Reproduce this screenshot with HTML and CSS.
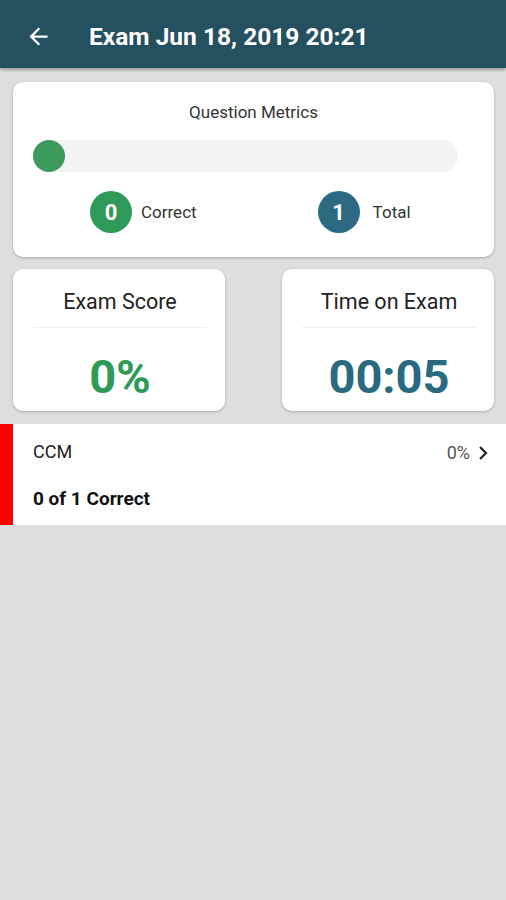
FILE: index.html
```html
<!DOCTYPE html>
<html lang="en">
<head>
    <meta charset="UTF-8">
    <meta name="viewport" content="width=device-width, initial-scale=1.0">
    <title>Exam Results</title>
    <link rel="stylesheet" href="styles.css">
</head>
<body>

    <header class="topbar">
        <svg class="back" width="27" height="27" viewBox="0 0 24 24">
            <path d="M20 11H7.83l5.59-5.59L12 4l-8 8 8 8 1.41-1.41L7.83 13H20v-2z" fill="#fff"/>
        </svg>
        <h1>Exam Jun 18, 2019 20:21</h1>
    </header>

    <main class="content">
        <section class="card metrics">
            <h2>Question Metrics</h2>
            <div class="track">
                <div class="fill"></div>
            </div>
            <div class="counts">
                <div class="count">
                    <span class="badge green">0</span>
                    <span class="label">Correct</span>
                </div>
                <div class="count">
                    <span class="badge blue">1</span>
                    <span class="label">Total</span>
                </div>
            </div>
        </section>

        <div class="stats">
            <section class="card stat">
                <h3>Exam Score</h3>
                <div class="value green-text">0%</div>
            </section>
            <section class="card stat">
                <h3>Time on Exam</h3>
                <div class="value blue-text">00:05</div>
            </section>
        </div>
    </main>

    <div class="topic">
        <div class="topic-head">
            <span class="topic-name">CCM</span>
            <span class="topic-pct">0%
                <svg width="10" height="16" viewBox="0 0 10 16">
                    <polyline points="2,2 8,8 2,14" fill="none" stroke="#222" stroke-width="2.2"/>
                </svg>
            </span>
        </div>
        <div class="topic-score">0 of 1 Correct</div>
    </div>

</body>
</html>
```

FILE: styles.css
```css
body {
    font-family: Roboto, 'Noto Sans', sans-serif;
    background-color: #dedede;
    color: #222;
    margin: 0;
    padding: 0;
}

.topbar {
    height: 68px;
    box-sizing: border-box;
    padding: 4px 0 0 25px;
    background-color: #25505f;
    display: flex;
    align-items: center;
    box-shadow: 0 2px 3px rgba(0, 0, 0, 0.3);
}

.topbar h1 {
    margin: 0 0 0 37px;
    font-size: 24.5px;
    font-weight: 700;
    color: #fff;
}

.content {
    padding: 14px 12px 13px 13px;
}

.card {
    background-color: #fff;
    border-radius: 10px;
    box-shadow: 0 1px 3px rgba(0, 0, 0, 0.25);
}

.metrics {
    height: 175px;
    box-sizing: border-box;
    padding: 20px 36px 0 20px;
}

.metrics h2 {
    margin: 0;
    font-size: 17px;
    line-height: 20px;
    font-weight: 400;
    text-align: center;
    padding-left: 16px;
    color: #333;
}

.track {
    margin-top: 18px;
    height: 32px;
    border-radius: 16px;
    background-color: #f3f3f3;
}

.fill {
    width: 32px;
    height: 32px;
    border-radius: 50%;
    background-color: #3b9b5b;
}

.counts {
    display: flex;
    margin-top: 19px;
}

.count {
    display: flex;
    align-items: center;
    gap: 9px;
}

.count:first-child {
    margin-left: 57px;
}

.count:last-child {
    margin-left: 121px;
}

.badge {
    width: 42px;
    height: 42px;
    border-radius: 50%;
    display: flex;
    align-items: center;
    justify-content: center;
    color: #fff;
    font-size: 22px;
    font-weight: 700;
}

.badge.green {
    background-color: #2e9a57;
}

.badge.blue {
    background-color: #2b6a80;
    margin-right: 4px;
}

.label {
    font-size: 17px;
    color: #333;
}

.stats {
    display: flex;
    justify-content: space-between;
    margin-top: 12px;
}

.stat {
    width: 212px;
    height: 142px;
    box-sizing: border-box;
    padding: 20px 18px 0 20px;
    text-align: center;
}

.stat h3 {
    margin: 0;
    font-size: 21.5px;
    line-height: 25px;
    font-weight: 400;
    color: #222;
    padding-bottom: 13px;
    border-bottom: 1px solid #f0f0f0;
}

.value {
    font-size: 47px;
    font-weight: 700;
    margin-top: 21px;
}

.green-text {
    color: #2e9a57;
}

.blue-text {
    color: #296a80;
}

.topic {
    background-color: #fff;
    border-left: 13px solid #ff0000;
    height: 101px;
    box-sizing: border-box;
    padding: 16px 18px 0 20px;
}

.topic-head {
    display: flex;
    justify-content: space-between;
    align-items: center;
}

.topic-name {
    font-size: 18px;
    color: #222;
}

.topic-pct {
    display: flex;
    align-items: center;
    gap: 8px;
    font-size: 18px;
    color: #555;
    margin-top: 2px;
}

.topic-score {
    margin-top: 24px;
    font-size: 19px;
    font-weight: 700;
    color: #111;
}
```
